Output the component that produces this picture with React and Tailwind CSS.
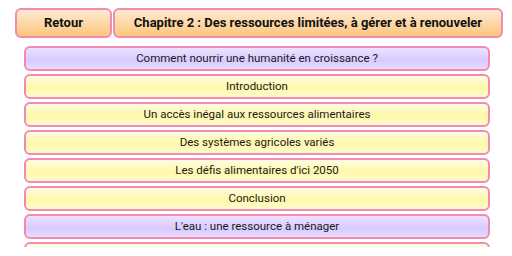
import React from "react";

const rows = [
  { t: "Comment nourrir une humanité en croissance ?", c: "p" },
  { t: "Introduction", c: "y" },
  { t: "Un accès inégal aux ressources alimentaires", c: "y" },
  { t: "Des systèmes agricoles variés", c: "y" },
  { t: "Les défis alimentaires d'ici 2050", c: "y" },
  { t: "Conclusion", c: "y" },
  { t: "L'eau : une ressource à ménager", c: "p" },
  { t: "", c: "y" },
];

export default function App() {
  return (
    <div
      className="w-[512px] h-[256px] overflow-hidden bg-white"
      style={{ fontFamily: "Roboto, 'Liberation Sans', sans-serif" }}
    >
      <div className="flex gap-px pl-[15px] pr-[9px] pt-[8px]">
        <div className="w-[97px] h-[30px] flex items-center justify-center rounded-[6px] border-2 border-[#f38bb0] bg-gradient-to-b from-[#fdebd2] to-[#fcc57c] text-[13px] font-bold text-[#111]">
          Retour
        </div>
        <div className="flex-1 h-[30px] flex items-center justify-center rounded-[6px] border-2 border-[#f38bb0] bg-gradient-to-b from-[#fdebd2] to-[#fcc57c] text-[13px] font-bold text-[#111]">
          Chapitre 2 : Des ressources limitées, à gérer et à renouveler
        </div>
      </div>
      <div className="h-[209px] overflow-hidden flex flex-col gap-[3px] pl-[24px] pr-[22px] pt-[8px]">
        {rows.map((r, i) => (
          <div
            key={i}
            className={
              "h-[25px] shrink-0 flex items-center justify-center rounded-[6px] border-2 border-[#f38bb0] text-[11.5px] text-[#1a1a1a] " +
              (r.c === "p"
                ? "bg-[linear-gradient(to_bottom,#ebe3ff,#d9caff_60%,#e6dcff)]"
                : "bg-[linear-gradient(to_bottom,#fffce4,#fff8a8_55%,#fffad0)]")
            }
          >
            {r.t}
          </div>
        ))}
      </div>
    </div>
  );
}
